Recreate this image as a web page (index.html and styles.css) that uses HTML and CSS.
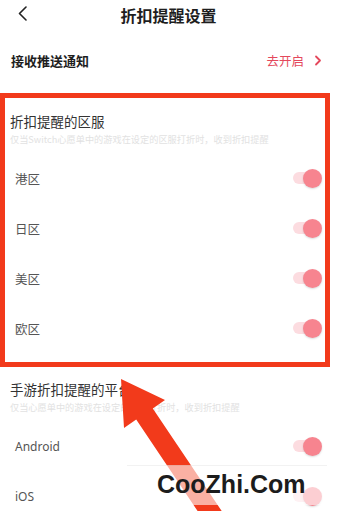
FILE: index.html
```html
<!DOCTYPE html>
<html lang="zh">
<head>
<meta charset="utf-8">
<title>折扣提醒设置</title>
<link rel="stylesheet" href="styles.css">
</head>
<body>
<div class="page">
  <header class="nav">
    <svg class="back" width="11" height="15" viewBox="0 0 11 15"><path d="M9 1 L2.5 7.5 L9 14" fill="none" stroke="#222" stroke-width="1.6" stroke-linecap="round" stroke-linejoin="round"/></svg>
    <h1 class="nav-title">折扣提醒设置</h1>
    <span></span>
  </header>

  <div class="push-row">
    <span class="push-label">接收推送通知</span>
    <span class="push-go">去开启<svg width="8" height="11" viewBox="0 0 8 11"><path d="M2 1.5 L6 5.5 L2 9.5" fill="none" stroke="#e4485c" stroke-width="1.8" stroke-linecap="round" stroke-linejoin="round"/></svg></span>
  </div>

  <section class="group group-region">
    <h2 class="group-title">折扣提醒的区服</h2>
    <p class="group-desc">仅当Switch心愿单中的游戏在设定的区服打折时，收到折扣提醒</p>
    <div class="row"><span class="row-label">港区</span><span class="toggle"></span></div>
    <div class="row"><span class="row-label">日区</span><span class="toggle"></span></div>
    <div class="row"><span class="row-label">美区</span><span class="toggle"></span></div>
    <div class="row"><span class="row-label">欧区</span><span class="toggle"></span></div>
  </section>

  <section class="group group-platform">
    <h2 class="group-title">手游折扣提醒的平台</h2>
    <p class="group-desc">仅当心愿单中的游戏在设定的平台打折时，收到折扣提醒</p>
    <div class="row"><span class="row-label latin">Android</span><span class="toggle"></span></div>
    <div class="row"><span class="row-label latin">iOS</span><span class="toggle"></span></div>
  </section>

  <div class="highlight"></div>
  <svg class="arrow" width="337" height="511" viewBox="0 0 337 511">
    <polygon points="121,379 165,400 152.8,408.4 230.7,524.4 214.1,535.6 136.2,419.6 124,428" fill="#f23a1b"/>
  </svg>
  <div class="watermark">CooZhi.Com</div>
</div>
</body>
</html>
```

FILE: styles.css
```css
html, body {
  margin: 0;
  padding: 0;
  background: #fff;
}

.page {
  position: relative;
  width: 337px;
  height: 511px;
  overflow: hidden;
  background: #fff;
  font-family: "Noto Sans CJK SC", "Noto Sans", sans-serif;
  color: #222;
}

.nav {
  display: grid;
  grid-template-columns: 1fr auto 1fr;
  align-items: center;
  height: 30px;
  padding-left: 17px;
}

.back {
  display: block;
  align-self: start;
  margin-top: 6px;
}

.nav-title {
  margin: 0;
  font-size: 16px;
  font-weight: 600;
  line-height: 30px;
  color: #1e1e1e;
  padding-right: 17px;
}

.push-row {
  display: flex;
  justify-content: space-between;
  align-items: center;
  height: 40px;
  margin-top: 10px;
  padding: 0 15px 0 11px;
}

.push-label {
  font-size: 13px;
  font-weight: 700;
  color: #1e1e1e;
}

.push-go {
  display: flex;
  align-items: center;
  gap: 10px;
  font-size: 12.5px;
  color: #e4485c;
}

.push-go svg {
  display: block;
}

.group {
  display: flex;
  flex-direction: column;
}

.group-region {
  margin-top: 32px;
}

.group-platform {
  margin-top: 27px;
}

.group-title {
  margin: 0;
  padding-left: 10px;
  font-size: 13.5px;
  font-weight: 400;
  line-height: 18px;
  color: #333;
}

.group-desc {
  margin: 3px 0 8px;
  padding-left: 10px;
  font-size: 9.2px;
  line-height: 12px;
  color: #e2e2e2;
  white-space: nowrap;
}

.row {
  display: flex;
  justify-content: space-between;
  align-items: center;
  height: 50px;
  padding: 0 15px;
}

.row-label {
  font-size: 12.5px;
  color: #555;
}

.row-label.latin {
  font-family: "Noto Sans", sans-serif;
  font-size: 12px;
}

.toggle {
  position: relative;
  width: 29px;
  height: 19px;
}

.toggle::before {
  content: "";
  position: absolute;
  left: 0;
  top: 3.5px;
  width: 25px;
  height: 12px;
  border-radius: 6px;
  background: #fcdce0;
}

.toggle::after {
  content: "";
  position: absolute;
  right: 0;
  top: 0;
  width: 19px;
  height: 19px;
  border-radius: 50%;
  background: #f7848f;
  box-shadow: 0 1px 2px rgba(0, 0, 0, 0.15);
}

.highlight {
  position: absolute;
  left: 0;
  top: 93px;
  width: 330px;
  height: 274px;
  box-sizing: border-box;
  border: 5px solid #f23a1b;
}

.arrow {
  position: absolute;
  left: 0;
  top: 0;
}

.watermark {
  position: absolute;
  left: 127px;
  top: 465px;
  width: 200px;
  height: 40px;
  box-sizing: border-box;
  padding-left: 30px;
  background: rgba(255, 255, 255, 0.6);
  border-top: 1px solid rgba(0, 0, 0, 0.05);
  font-family: "Liberation Sans", Arial, sans-serif;
  font-weight: 700;
  font-size: 25px;
  line-height: 37px;
  color: #1c1c1c;
  white-space: nowrap;
}
```
